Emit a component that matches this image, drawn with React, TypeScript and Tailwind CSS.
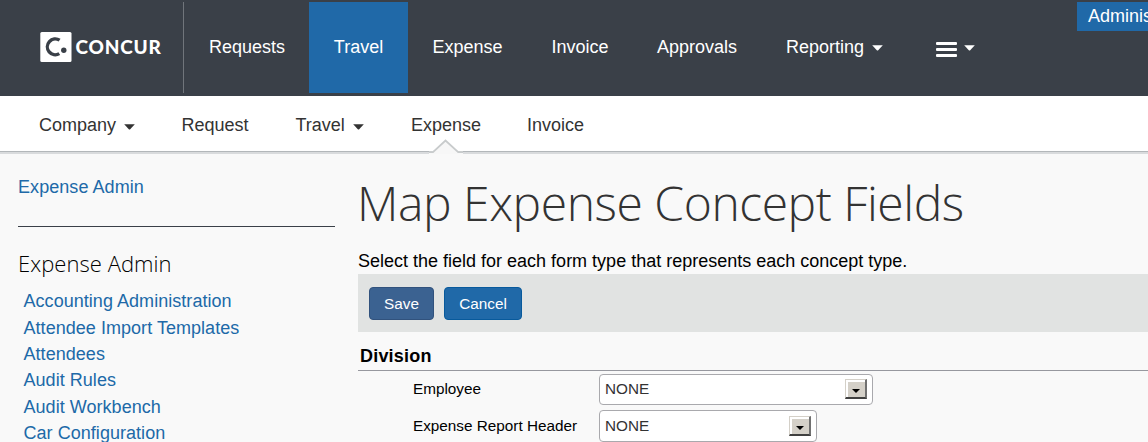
type CaretProps = { className?: string };

function Caret({ className = "" }: CaretProps) {
  return (
    <svg className={className} width="11" height="6" viewBox="0 0 11 6" fill="currentColor" aria-hidden="true">
      <path d="M0.2 0.3H10.8L6.2 5.2Q5.5 5.8 4.8 5.2Z" />
    </svg>
  );
}

function Logo() {
  return (
    <div className="flex w-[183px] shrink-0 items-center pl-10">
      <svg className="-mt-px" width="32" height="30" viewBox="0 0 32 30" aria-hidden="true">
        <rect x="0.3" y="0" width="31.2" height="30" rx="1.5" fill="#fff" />
        <path d="M19.6 8.2A7.9 7.9 0 1 0 19.3 21.6" fill="none" stroke="#3a4048" strokeWidth="3.4" />
        <circle cx="23.8" cy="18.3" r="2.7" fill="#3a4048" />
      </svg>
      <span className="-mt-[2px] ml-[3.5px] font-['Lato','Liberation_Sans',sans-serif] text-[19px] leading-[24px] font-black tracking-[0.8px] text-white">
        CONCUR
      </span>
    </div>
  );
}

function TopBar() {
  return (
    <header className="flex h-24 items-start justify-between bg-[#3a4048] pt-[2px] text-[18px] text-white">
      <div className="flex h-[91px]">
        <Logo />
        <nav className="flex border-l border-[#70757b] leading-[90px]">
          <a className="w-[125px] pl-[25px]">Requests</a>
          <a className="w-[99px] bg-[#2069a8] text-center">Travel</a>
          <a className="w-[119px] pl-[24.5px]">Expense</a>
          <a className="w-[106px] pl-[24.5px]">Invoice</a>
          <a className="w-[129px] pl-[24px]">Approvals</a>
          <a className="flex items-start pl-[24px]">
            Reporting
            <Caret className="mt-[43px] ml-2" />
          </a>
          <a className="flex items-start pl-[53px]" aria-label="More">
            <span className="mt-[40px] flex flex-col gap-[3px]">
              <span className="h-[3px] w-[21px] rounded-[1px] bg-white" />
              <span className="h-[3px] w-[21px] rounded-[1px] bg-white" />
              <span className="h-[3px] w-[21px] rounded-[1px] bg-white" />
            </span>
            <Caret className="mt-[43px] ml-[7px]" />
          </a>
        </nav>
      </div>
      <div className="h-[29px] w-[71px] overflow-hidden bg-[#2069a8] pl-[11px] leading-[28px] whitespace-nowrap">
        Adminis
      </div>
    </header>
  );
}

function SubNav() {
  return (
    <nav className="h-[58px] border-b-2 border-[#d9dbdd] bg-white text-[18px] leading-[58px] text-[#333]">
      <div className="flex h-[56px] border-b border-[#b3b7ba] pl-[39px]">
        <a className="flex w-[142.5px] items-start">
          Company
          <Caret className="mt-[28px] ml-[8px]" />
        </a>
        <a className="w-[114px]">Request</a>
        <a className="flex w-[115.5px] items-start">
          Travel
          <Caret className="mt-[28px] ml-[8px]" />
        </a>
        <a className="relative w-[116px]">
          Expense
          <svg className="absolute top-[43px] left-[18px]" width="34" height="15" viewBox="0 0 34 15" aria-hidden="true">
            <path d="M0 15V12.5H3.5L16.5 1.5L29.5 12.5H34V15Z" fill="#f7f7f7" />
            <path d="M0 13.2H4L16.5 1.5L29.2 13.2H34" fill="none" stroke="#c8cbcc" strokeWidth="1.8" />
          </svg>
        </a>
        <a>Invoice</a>
      </div>
    </nav>
  );
}

const adminLinks = [
  "Accounting Administration",
  "Attendee Import Templates",
  "Attendees",
  "Audit Rules",
  "Audit Workbench",
  "Car Configuration",
];

function Sidebar() {
  return (
    <aside className="ml-[18px] w-[317px] shrink-0 text-[18px] text-[#2069a8]">
      <div className="h-[73px] border-b border-[#3a4048] pt-[23px] leading-[20px] tracking-[0.06px]">
        <a>Expense Admin</a>
      </div>
      <h2 className="mt-[21px] font-['Open_Sans',sans-serif] text-[22px] leading-[30px] font-light tracking-[0.05px] text-black">
        Expense Admin
      </h2>
      <ul className="mt-[10.2px] pl-[5.5px] leading-[26.36px] tracking-[0.04px]">
        {adminLinks.map((label) => (
          <li key={label}>
            <a>{label}</a>
          </li>
        ))}
      </ul>
    </aside>
  );
}

type FieldProps = { label: string; selectClass: string; labelClass?: string };

function Field({ label, selectClass, labelClass = "" }: FieldProps) {
  return (
    <div className="flex pl-[55px] text-[15.3px]">
      <label className={`w-[186px] text-black ${labelClass}`}>{label}</label>
      <div className={`flex items-start justify-between rounded-[4px] border border-[#a9a9ad] bg-white pr-[5px] pl-[5px] leading-[27px] text-[#333] ${selectClass}`}>
        <span>NONE</span>
        <span className="mt-[4px] flex h-[20px] w-[22px] items-center justify-center border-t border-r-2 border-b-2 border-l border-t-[#d4d0c8] border-r-[#707070] border-b-[#404040] border-l-[#d4d0c8] bg-[#d4d0c8] text-black shadow-[inset_2px_2px_0_#fff]">
          <svg className="mt-[4px]" width="8" height="4" viewBox="0 0 8 4" fill="currentColor" aria-hidden="true">
            <path d="M0 0H8L4 4Z" />
          </svg>
        </span>
      </div>
    </div>
  );
}

function MainPanel() {
  return (
    <main className="ml-[23px] flex min-w-0 flex-1 flex-col text-black">
      <h1 className="mt-[16px] -ml-px font-['Open_Sans',sans-serif] text-[48px] leading-[66px] font-light tracking-[-0.45px] text-[#333]">
        Map Expense Concept Fields
      </h1>
      <p className="mt-[14px] h-[24px] text-[18px] leading-[23px]">
        Select the field for each form type that represents each concept type.
      </p>
      <div className="flex h-[58px] gap-[10px] bg-[#e1e3e2] pt-[13px] pl-[11px] text-[15.3px] leading-[31px] text-white">
        <button className="h-[33px] w-[65px] rounded-[4px] border border-[#31527d] bg-[#3b6291]">Save</button>
        <button className="h-[33px] w-[78px] rounded-[4px] border border-[#085a9c] bg-[#2069a8]">Cancel</button>
      </div>
      <h3 className="h-[39px] border-b border-[#97989f] pt-[14px] pl-[2px] text-[18px] leading-[20px] font-bold tracking-[0.2px]">
        Division
      </h3>
      <div className="mt-[3px] flex flex-col gap-[5px]">
        <Field label="Employee" labelClass="leading-[29px]" selectClass="h-[31px] w-[274px]" />
        <Field label="Expense Report Header" labelClass="leading-[31px]" selectClass="h-[32px] w-[218px] pt-px" />
      </div>
    </main>
  );
}

export default function App() {
  return (
    <div className="h-[442px] w-[1148px] overflow-hidden bg-[#f9f9f9] font-['Liberation_Sans',Arial,sans-serif]">
      <TopBar />
      <SubNav />
      <div className="flex">
        <Sidebar />
        <MainPanel />
      </div>
    </div>
  );
}
